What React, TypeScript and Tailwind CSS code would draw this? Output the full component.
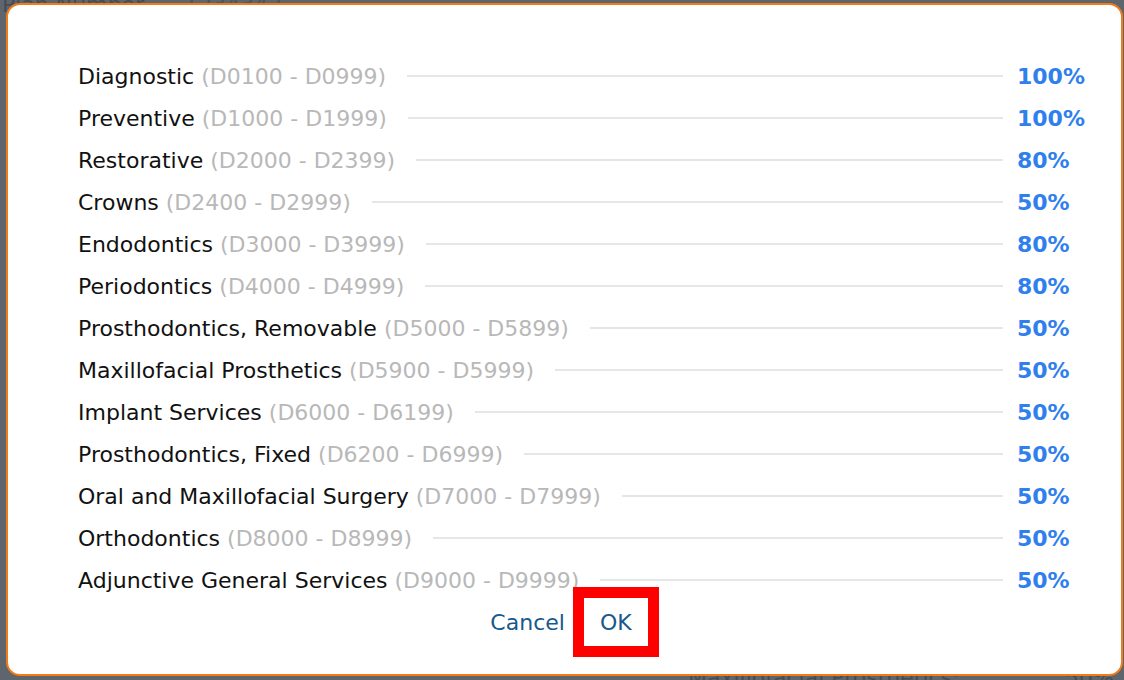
import React from 'react';

type Category = { name: string; range: string; pct: string };

const categories: Category[] = [
  { name: 'Diagnostic', range: '(D0100 - D0999)', pct: '100%' },
  { name: 'Preventive', range: '(D1000 - D1999)', pct: '100%' },
  { name: 'Restorative', range: '(D2000 - D2399)', pct: '80%' },
  { name: 'Crowns', range: '(D2400 - D2999)', pct: '50%' },
  { name: 'Endodontics', range: '(D3000 - D3999)', pct: '80%' },
  { name: 'Periodontics', range: '(D4000 - D4999)', pct: '80%' },
  { name: 'Prosthodontics, Removable', range: '(D5000 - D5899)', pct: '50%' },
  { name: 'Maxillofacial Prosthetics', range: '(D5900 - D5999)', pct: '50%' },
  { name: 'Implant Services', range: '(D6000 - D6199)', pct: '50%' },
  { name: 'Prosthodontics, Fixed', range: '(D6200 - D6999)', pct: '50%' },
  { name: 'Oral and Maxillofacial Surgery', range: '(D7000 - D7999)', pct: '50%' },
  { name: 'Orthodontics', range: '(D8000 - D8999)', pct: '50%' },
  { name: 'Adjunctive General Services', range: '(D9000 - D9999)', pct: '50%' },
];

const CoverageRow: React.FC<{ item: Category }> = ({ item }) => (
  <div className="flex items-center h-[42px]">
    <span className="whitespace-nowrap text-[#111111]">
      {item.name} <span className="text-[#b8b8b8]">{item.range}</span>
    </span>
    <div className="flex-1 h-[2px] bg-[#e6e6e6] ml-[21px] mr-[14px]" />
    <div className="w-[71px] overflow-hidden whitespace-nowrap font-bold text-[#2f80ed]">{item.pct}</div>
  </div>
);

export default function App() {
  return (
    <div className="relative w-[1124px] h-[680px] overflow-hidden bg-white font-['DejaVu_Sans',sans-serif] text-[22px]">
      {/* page behind the dialog */}
      <div className="absolute inset-0 flex flex-col justify-between text-black">
        <div className="-mt-[12px] pl-[2px] flex gap-10 whitespace-nowrap">
          <span>Plan Number</span>
          <span className="text-[#1a5a8a]">1234342</span>
        </div>
        <div className="flex justify-between pl-[688px] pr-[10px] -mb-[14px] whitespace-nowrap">
          <span>Maxillofacial Prosthetics:</span>
          <span>50%</span>
        </div>
      </div>
      <div className="absolute inset-0 bg-[#4c545c]/90" />

      {/* dialog */}
      <div className="absolute left-[6px] top-[3px] w-[1117px] h-[673px] bg-white border-2 border-[#f27b1a] rounded-[14px] pl-[70px] pr-[33px] pt-[50px]">
        <div className="flex flex-col">
          {categories.map((c) => (
            <CoverageRow key={c.name} item={c} />
          ))}
        </div>
        <div className="flex justify-center gap-[3px] -mt-[3px] pr-[44px]">
          <button className="h-[48px] px-4 text-[#17598c]">Cancel</button>
          <button className="h-[48px] px-4 text-[#17598c] outline-[11px] outline-solid outline-[#ff0000]">OK</button>
        </div>
      </div>
    </div>
  );
}
